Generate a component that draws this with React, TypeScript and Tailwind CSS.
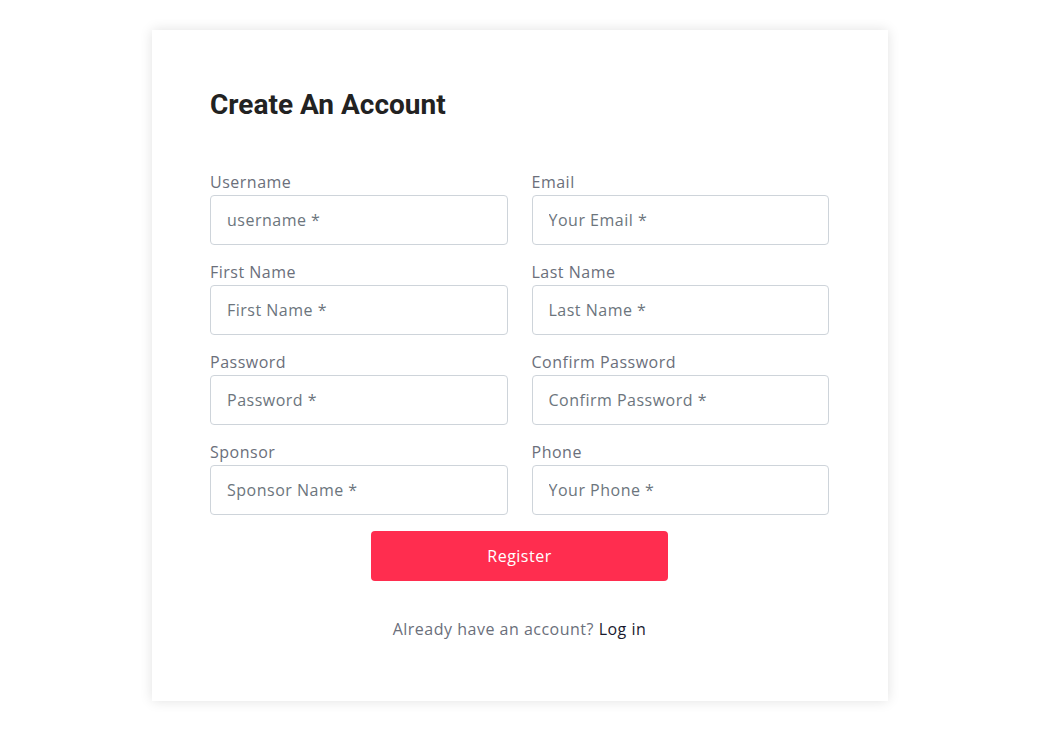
import { useState } from 'react';

const fields = [
  { label: 'Username', placeholder: 'username *', type: 'text' },
  { label: 'Email', placeholder: 'Your Email *', type: 'email' },
  { label: 'First Name', placeholder: 'First Name *', type: 'text' },
  { label: 'Last Name', placeholder: 'Last Name *', type: 'text' },
  { label: 'Password', placeholder: 'Password *', type: 'password' },
  { label: 'Confirm Password', placeholder: 'Confirm Password *', type: 'password' },
  { label: 'Sponsor', placeholder: 'Sponsor Name *', type: 'text' },
  { label: 'Phone', placeholder: 'Your Phone *', type: 'tel' },
];

export default function App() {
  const [values, setValues] = useState<Record<string, string>>({});

  return (
    <div className="min-h-screen bg-white pt-[30px] font-['Open_Sans',sans-serif] tracking-[0.5px]">
      <div className="ml-[152px] w-[736px] bg-white pl-[58px] pr-[59px] pt-[58px] pb-[60px] shadow-[0_0_12px_rgba(0,0,0,0.12)]">
        <h2 className="font-['Roboto',sans-serif] text-[28px] leading-[34px] font-bold tracking-normal text-[#222]">
          Create An Account
        </h2>

        <form className="mt-[48px]" onSubmit={(e) => e.preventDefault()}>
          <div className="grid grid-cols-2 gap-x-[24px] gap-y-[15px]">
            {fields.map((f) => (
              <div key={f.label}>
                <label className="block text-[16px] leading-[24px] text-[#6b6f7b] mb-px">{f.label}</label>
                <input
                  type={f.type}
                  placeholder={f.placeholder}
                  value={values[f.label] || ''}
                  onChange={(e) => setValues({ ...values, [f.label]: e.target.value })}
                  className="block h-[50px] w-full rounded-[4px] border border-[#ced4da] bg-white px-4 text-[16px] tracking-[0.5px] text-[#495057] placeholder:text-[#6c757d] outline-none"
                />
              </div>
            ))}
          </div>

          <div className="mt-4 flex justify-center">
            <button
              type="submit"
              className="h-[50px] w-[297px] rounded-[4px] bg-[#ff2d4f] text-[16px] tracking-[0.5px] text-white"
            >
              Register
            </button>
          </div>
        </form>

        <p className="mt-[36px] text-center text-[16px] leading-[24px] text-[#6b6f7b]">
          Already have an account? <a href="#" className="text-[#1a1a2e]">Log in</a>
        </p>
      </div>
    </div>
  );
}
